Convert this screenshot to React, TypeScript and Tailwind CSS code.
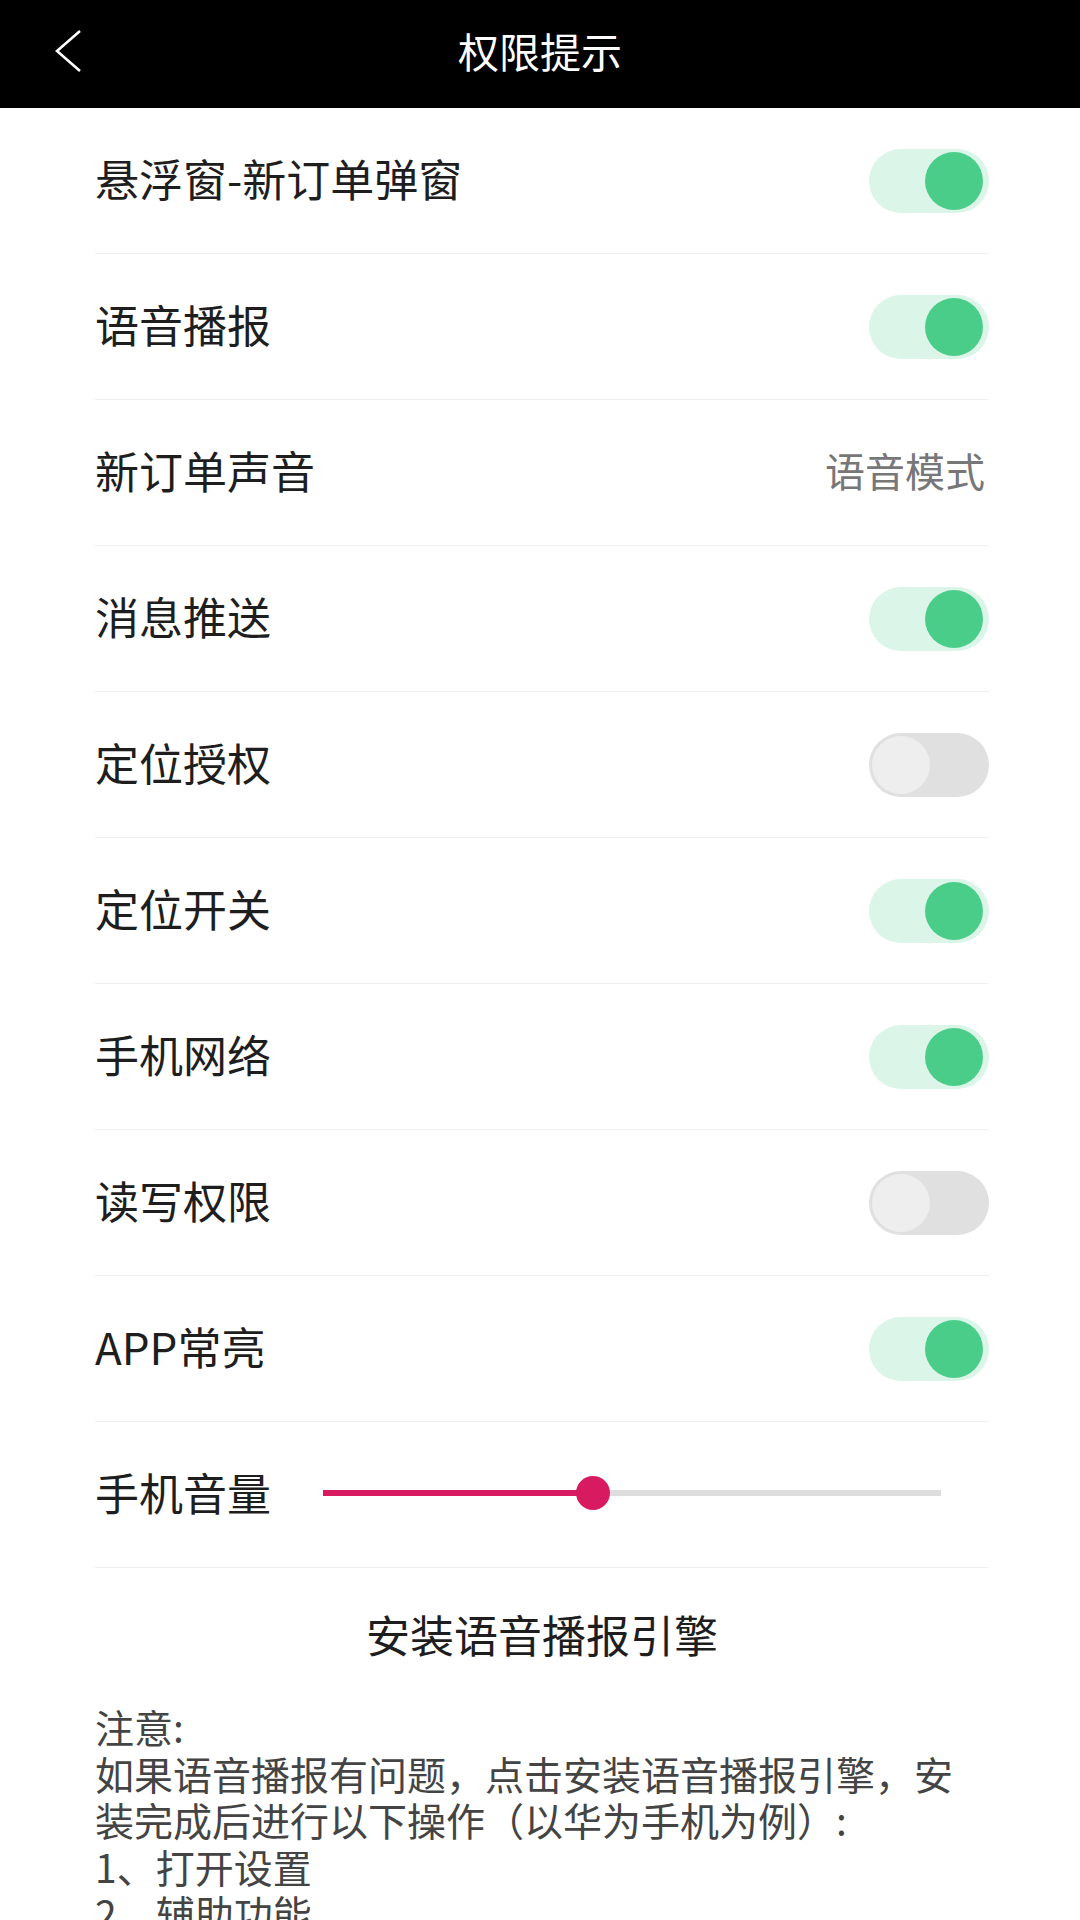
import React from "react";

const font = { fontFamily: '"Noto Sans CJK SC", "Noto Sans", sans-serif' };

function Toggle({ on }: { on: boolean }) {
  return on ? (
    <div className="relative w-[120px] h-[64px] rounded-full bg-[#dcf5e9]">
      <div className="absolute right-[6px] top-[3px] w-[58px] h-[58px] rounded-full bg-[#4bcd8a]" />
    </div>
  ) : (
    <div className="relative w-[120px] h-[64px] rounded-full bg-[#e0e0e0]">
      <div className="absolute left-[3px] top-[3px] w-[58px] h-[58px] rounded-full bg-[#eeeeee]" />
    </div>
  );
}

function Row({ children }: { children: React.ReactNode }) {
  return (
    <div className="h-[146px] flex items-center justify-between border-b border-[#f0f0f0]">
      {children}
    </div>
  );
}

const rows: { label: string; kind: "on" | "off" | "text"; value?: string }[] = [
  { label: "悬浮窗-新订单弹窗", kind: "on" },
  { label: "语音播报", kind: "on" },
  { label: "新订单声音", kind: "text", value: "语音模式" },
  { label: "消息推送", kind: "on" },
  { label: "定位授权", kind: "off" },
  { label: "定位开关", kind: "on" },
  { label: "手机网络", kind: "on" },
  { label: "读写权限", kind: "off" },
  { label: "APP常亮", kind: "on" },
];

export default function App() {
  return (
    <div className="w-[1080px] h-[1920px] overflow-hidden bg-white" style={font}>
      <div className="relative h-[108px] bg-black flex items-center justify-center">
        <svg className="absolute left-[50px] top-[28px]" width="36" height="46" viewBox="0 0 36 46">
          <polyline points="30,3 7,23 30,43" fill="none" stroke="#ffffff" strokeWidth="2.6" strokeLinejoin="miter" />
        </svg>
        <span className="text-white text-[41px] leading-none -mt-[8px]">权限提示</span>
      </div>
      <div className="pl-[95px] pr-[91px]">
        {rows.map((r) => (
          <Row key={r.label}>
            <span className="text-[44px] text-[#1e1e1e] leading-none -mt-[5px]">{r.label}</span>
            {r.kind === "text" ? (
              <span className="text-[40px] text-[#777777] leading-none pr-[4px] -mt-[5px]">{r.value}</span>
            ) : (
              <Toggle on={r.kind === "on"} />
            )}
          </Row>
        ))}
        <Row>
          <span className="text-[44px] text-[#1e1e1e] leading-none -mt-[5px]">手机音量</span>
          <div className="relative w-[618px] h-[34px] mr-[48px] -mt-[3px]">
            <div className="absolute left-0 right-0 top-[14px] h-[6px] bg-[#dddddd]" />
            <div className="absolute left-0 w-[270px] top-[14px] h-[6px] bg-[#d81b60]" />
            <div className="absolute left-[253px] top-0 w-[34px] h-[34px] rounded-full bg-[#d81b60]" />
          </div>
        </Row>
        <div className="h-[138px] flex items-center justify-center">
          <span className="text-[44px] text-[#1e1e1e] leading-none -mt-[6px]">安装语音播报引擎</span>
        </div>
        <div className="text-[39px] leading-[46.5px] text-[#444444] -mt-[3px]">
          <div>注意:</div>
          <div>如果语音播报有问题，点击安装语音播报引擎，安装完成后进行以下操作（以华为手机为例）:</div>
          <div>1、打开设置</div>
          <div>2、辅助功能</div>
        </div>
      </div>
    </div>
  );
}
